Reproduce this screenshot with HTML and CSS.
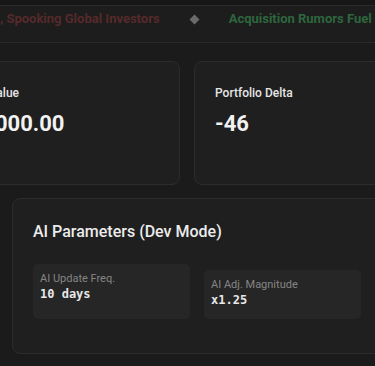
FILE: index.html
```html
<!DOCTYPE html>
<html>
<head>
<meta charset="utf-8">
<link rel="stylesheet" href="styles.css">
</head>
<body>
<div class="topstrip"></div>
<div class="ticker">
  <div class="ticker-track">
    <span class="news neg">, Spooking Global Investors</span>
    <span class="sep"></span>
    <span class="news pos">Acquisition Rumors Fuel Surge in Tech Stocks</span>
  </div>
</div>
<main class="content">
  <section class="stats">
    <div class="card stat">
      <div class="stat-label">Portfolio Value</div>
      <div class="stat-value">$100,000.00</div>
    </div>
    <div class="card stat">
      <div class="stat-label">Portfolio Delta</div>
      <div class="stat-value">-46</div>
    </div>
  </section>
  <section class="card params">
    <h2 class="params-title">AI Parameters (Dev Mode)</h2>
    <div class="param-grid">
      <div class="param param-first">
        <div class="param-label">AI Update Freq.</div>
        <div class="param-value">10 days</div>
      </div>
      <div class="param">
        <div class="param-label">AI Adj. Magnitude</div>
        <div class="param-value">x1.25</div>
      </div>
      <div class="param">
        <div class="param-label">AI Risk Bias</div>
        <div class="param-value">0.40</div>
      </div>
    </div>
  </section>
</main>
</body>
</html>
```
FILE: styles.css
```css
* { box-sizing: border-box; }
html, body {
  margin: 0;
  padding: 0;
  background: #1b1b1b;
  color: #e8e8e8;
  font-family: Roboto, "Noto Sans", sans-serif;
  overflow: hidden;
  width: 375px;
  height: 366px;
}
.topstrip {
  height: 5px;
  background: #171717;
}
.ticker {
  height: 38px;
  border-top: 1px solid #2a2a2a;
  border-bottom: 1px solid #2a2a2a;
  background: #1d1d1d;
  overflow: hidden;
  white-space: nowrap;
}
.ticker-track {
  display: flex;
  align-items: center;
  gap: 31px;
  padding-top: 5px;
}
.news {
  font-size: 13px;
  font-weight: 700;
  line-height: 16px;
}
.neg { color: #562a2b; }
.pos { color: #2e663d; }
.sep {
  width: 7px;
  height: 7px;
  background: #6a6a6a;
  transform: rotate(45deg);
  flex: none;
}
.content {
  padding-top: 18px;
}
.card {
  background: #1f1f1f;
  border: 1px solid #2c2c2c;
  border-radius: 8px;
}
.stats {
  display: grid;
  grid-template-columns: 262px 262px;
  gap: 14px;
  margin-left: -82px;
}
.stat {
  height: 124px;
  padding: 22px 20px;
}
.stat-label {
  font-size: 12px;
  font-weight: 500;
  line-height: 18px;
  color: #e6e6e6;
}
.stat-value {
  margin-top: 8px;
  font-size: 22px;
  font-weight: 700;
  line-height: 28px;
  color: #f2f2f2;
}
.params {
  margin: 13px 0 0 12px;
  width: 420px;
  padding: 21px 20px 34px;
}
.params-title {
  margin: 0 0 20px;
  font-size: 16px;
  font-weight: 500;
  line-height: 24px;
  color: #ececec;
}
.param-grid {
  display: grid;
  grid-template-columns: 157px 157px 157px;
  gap: 14px;
  align-items: end;
}
.param {
  background: #262626;
  border-radius: 5px;
  padding: 8px 7px 11px;
}
.param-first {
  padding-bottom: 17px;
}
.param-label {
  font-size: 11px;
  line-height: 14px;
  color: #858585;
}
.param-value {
  font-family: "DejaVu Sans Mono", "Liberation Mono", monospace;
  font-size: 12px;
  font-weight: 700;
  line-height: 16px;
  color: #e8e8e8;
}
```
